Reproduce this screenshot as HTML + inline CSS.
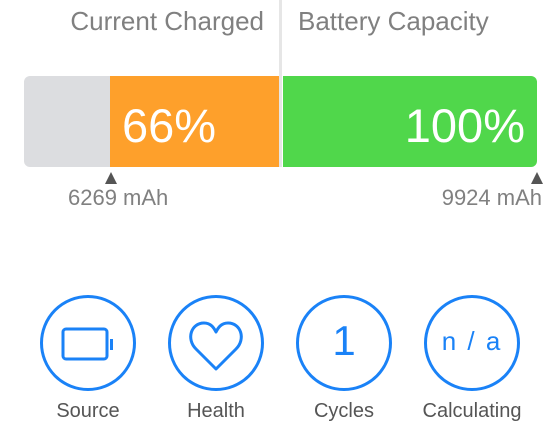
<!DOCTYPE html>
<html><head><style>
body{margin:0;width:558px;height:440px;background:#fff;position:relative;overflow:hidden;font-family:"Liberation Sans",sans-serif}
.a{position:absolute}
.t{color:#808080;font-size:26px;top:6px}
.c{position:absolute;width:90px;height:90px;border:3px solid #1a82f7;border-radius:50%;top:295px;box-sizing:content-box}
.l{position:absolute;top:400px;font-size:20px;color:#555;width:128px;text-align:center}
</style></head><body>
<div class="a" style="left:279px;top:0;width:3px;height:167px;background:#e6e6e6"></div>
<div class="a t" style="left:0;width:264px;text-align:right">Current Charged</div>
<div class="a t" style="left:298px">Battery Capacity</div>
<div class="a" style="left:24px;top:76px;width:255px;height:91px;background:#dcdde0;border-radius:6px 0 0 6px"></div>
<div class="a" style="left:110px;top:76px;width:169px;height:91px;background:#fea02b"></div>
<div class="a" style="left:283px;top:76px;width:254px;height:91px;background:#50d74b;border-radius:0 6px 6px 0"></div>
<div class="a" style="left:122px;top:98px;font-size:47px;color:#fff">66%</div>
<div class="a" style="left:283px;width:242px;text-align:right;top:98px;font-size:47px;color:#fff">100%</div>
<div class="a" style="left:105px;top:172px;width:0;height:0;border-left:6px solid transparent;border-right:6px solid transparent;border-bottom:12px solid #555"></div>
<div class="a" style="left:531px;top:172px;width:0;height:0;border-left:6px solid transparent;border-right:6px solid transparent;border-bottom:12px solid #555"></div>
<div class="a" style="left:68px;top:185px;font-size:22px;color:#808080">6269 mAh</div>
<div class="a" style="left:300px;width:242px;text-align:right;top:185px;font-size:22px;color:#808080">9924 mAh</div>
<div class="c" style="left:40px"></div>
<div class="c" style="left:168px"></div>
<div class="c" style="left:296px"></div>
<div class="c" style="left:424px"></div>
<svg class="a" style="left:0;top:0" width="558" height="440">
<rect x="63" y="329" width="44" height="30" rx="3" fill="none" stroke="#1a82f7" stroke-width="3"/>
<rect x="110" y="339" width="3" height="11" fill="#1a82f7"/>
<path d="M216 369 L196 349 C186 339 191 323 204 323 C211 323 214 328 216 332 C218 328 221 323 228 323 C241 323 246 339 236 349 Z" fill="none" stroke="#1a82f7" stroke-width="3" stroke-linejoin="round"/>
</svg>
<div class="a" style="left:296px;width:96px;text-align:center;top:317px;font-size:42px;color:#1a82f7">1</div>
<div class="a" style="left:424px;width:96px;text-align:center;top:326px;font-size:26px;color:#1a82f7;letter-spacing:2px">n / a</div>
<div class="l" style="left:24px">Source</div>
<div class="l" style="left:152px">Health</div>
<div class="l" style="left:280px">Cycles</div>
<div class="l" style="left:408px">Calculating</div>
</body></html>
